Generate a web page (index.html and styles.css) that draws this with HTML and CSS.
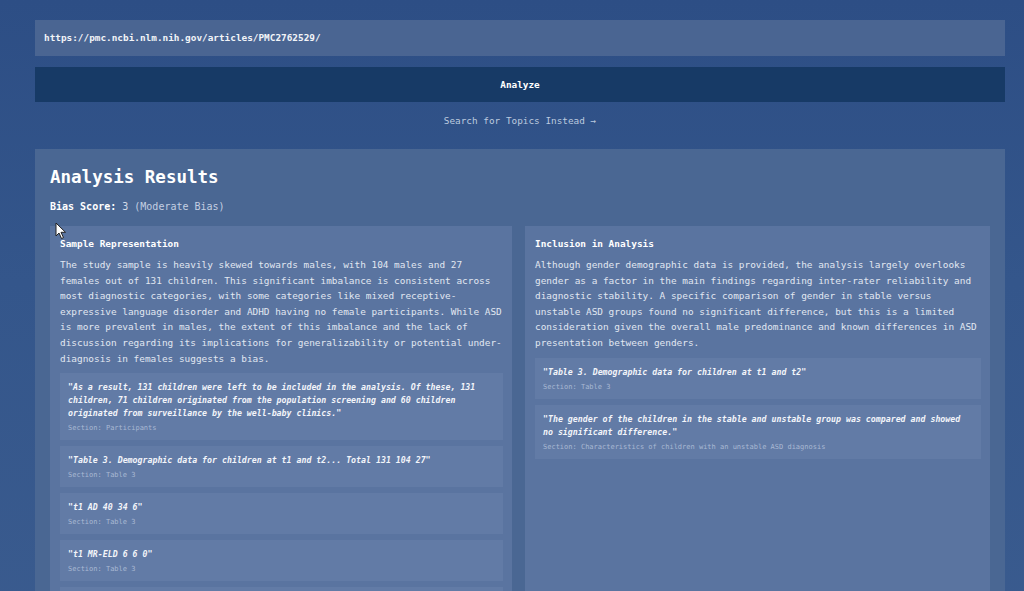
FILE: index.html
```html
<!DOCTYPE html>
<html lang="en">
<head>
    <meta charset="UTF-8">
    <meta name="viewport" content="width=device-width, initial-scale=1.0">
    <title>Bias Analyzer</title>
    <link rel="stylesheet" href="styles.css">
</head>
<body>
<div class="app">
    <div class="url-input">https://pmc.ncbi.nlm.nih.gov/articles/PMC2762529/</div>
    <button class="analyze-btn">Analyze</button>
    <div class="switch-link">Search for Topics Instead &rarr;</div>

    <div class="results">
        <h2>Analysis Results</h2>
        <p class="score"><strong>Bias Score:</strong> 3 <span class="score-label">(Moderate Bias)</span></p>

        <div class="grid">
            <div class="card">
                <h4>Sample Representation</h4>
                <p>The study sample is heavily skewed towards males, with 104 males and 27 females out of 131 children. This significant imbalance is consistent across most diagnostic categories, with some categories like mixed receptive-expressive language disorder and ADHD having no female participants. While ASD is more prevalent in males, the extent of this imbalance and the lack of discussion regarding its implications for generalizability or potential under-diagnosis in females suggests a bias.</p>
                <div class="quote">
                    <em>"As a result, 131 children were left to be included in the analysis. Of these, 131 children, 71 children originated from the population screening and 60 children originated from surveillance by the well-baby clinics."</em>
                    <span>Section: Participants</span>
                </div>
                <div class="quote">
                    <em>"Table 3. Demographic data for children at t1 and t2... Total 131 104 27"</em>
                    <span>Section: Table 3</span>
                </div>
                <div class="quote">
                    <em>"t1 AD 40 34 6"</em>
                    <span>Section: Table 3</span>
                </div>
                <div class="quote">
                    <em>"t1 MR-ELD 6 6 0"</em>
                    <span>Section: Table 3</span>
                </div>
                <div class="quote">
                    <em>"t1 ADHD 5 5 0"</em>
                    <span>Section: Table 3</span>
                </div>
            </div>

            <div class="card">
                <h4>Inclusion in Analysis</h4>
                <p>Although gender demographic data is provided, the analysis largely overlooks gender as a factor in the main findings regarding inter-rater reliability and diagnostic stability. A specific comparison of gender in stable versus unstable ASD groups found no significant difference, but this is a limited consideration given the overall male predominance and known differences in ASD presentation between genders.</p>
                <div class="quote">
                    <em>"Table 3. Demographic data for children at t1 and t2"</em>
                    <span>Section: Table 3</span>
                </div>
                <div class="quote">
                    <em>"The gender of the children in the stable and unstable group was compared and showed no significant difference."</em>
                    <span>Section: Characteristics of children with an unstable ASD diagnosis</span>
                </div>
            </div>
        </div>
    </div>
</div>

<svg class="cursor" width="12" height="18" viewBox="0 0 12 18">
    <path d="M1 1 L1 14 L4 11 L6.5 16.5 L8.5 15.6 L6 10.3 L10.5 10.3 Z" fill="#fff" stroke="#222" stroke-width="1"/>
</svg>
</body>
</html>
```

FILE: styles.css
```css
body {
    font-family: "DejaVu Sans Mono", monospace;
    background: linear-gradient(180deg, #2d4e85 0%, #34568b 40%, #3b5c8f 100%);
    color: #e3e9f2;
    margin: 0;
    padding: 20px 0 40px 35px;
    min-height: 100vh;
}
.app {
    width: 970px;
}
.url-input {
    background: #4a6592;
    height: 36px;
    line-height: 36px;
    padding: 0 9px;
    font-size: 9.4px;
    color: #f2f4f8;
    font-weight: bold;
}
.analyze-btn {
    display: block;
    width: 100%;
    height: 35px;
    margin-top: 11px;
    border: none;
    background: #173a66;
    color: #ffffff;
    font-family: inherit;
    font-size: 9.4px;
    font-weight: bold;
}
.switch-link {
    text-align: center;
    font-size: 9.4px;
    color: #bccadf;
    margin-top: 13px;
    line-height: 12px;
}
.results {
    background: #4a6793;
    margin-top: 22px;
    padding: 16px 15px 20px;
}
.results h2 {
    font-size: 17.5px;
    color: #ffffff;
    margin: 0;
    line-height: 24px;
}
.score {
    font-size: 10px;
    margin: 11px 0 0;
    line-height: 14px;
    color: #d3dbe8;
}
.score strong {
    color: #ffffff;
}
.score-label {
    color: #c4cfe2;
}
.grid {
    display: grid;
    grid-template-columns: 462px 465px;
    gap: 13px;
    margin-top: 12px;
}
.card {
    background: #5a74a0;
    padding: 11px 9px 10px 10px;
}
.card h4 {
    font-size: 9.42px;
    color: #ffffff;
    margin: 0;
    line-height: 14px;
}
.card p {
    font-size: 9.42px;
    line-height: 15.6px;
    margin: 6px 0 7px;
    color: #e1e7f1;
}
.quote {
    background: #627ba6;
    padding: 8px 8px 6px;
    margin-bottom: 6px;
}
.quote em {
    display: block;
    font-size: 8.25px;
    line-height: 13px;
    color: #f3f5fa;
    font-weight: bold;
}
.quote span {
    display: block;
    font-size: 7px;
    line-height: 12px;
    margin-top: 2px;
    color: #a9b9d3;
}
.cursor {
    position: absolute;
    left: 55px;
    top: 222px;
}
```
